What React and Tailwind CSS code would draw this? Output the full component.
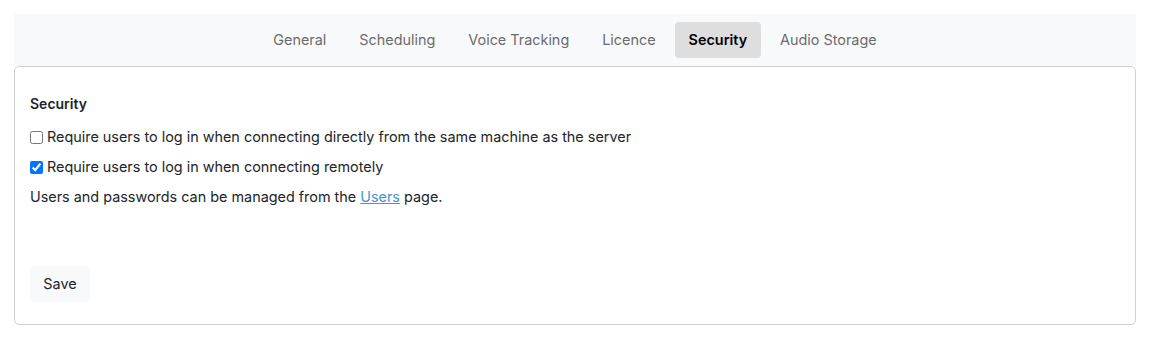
import React, { useState } from "react";

const tabs = ["General", "Scheduling", "Voice Tracking", "Licence", "Security", "Audio Storage"];

function App() {
  const [active, setActive] = useState("Security");
  const [local, setLocal] = useState(false);
  const [remote, setRemote] = useState(true);

  return (
    <div className="w-full min-h-screen bg-white p-[14px] font-['Inter','Liberation_Sans',sans-serif] text-[14.4px] text-[#212529]">
      {/* Tab bar */}
      <div className="bg-[#f8f9fa] flex justify-center gap-[5px] pt-2 pb-2">
        {tabs.map((tab) => (
          <button
            key={tab}
            onClick={() => setActive(tab)}
            className={`h-9 px-[14px] rounded-[4px] text-[14.4px] ${
              active === tab
                ? "bg-[#dedede] text-black font-semibold"
                : "text-[#6c6c6c]"
            }`}
          >
            {tab}
          </button>
        ))}
      </div>

      {/* Card */}
      <div className="border border-[#d0d0d0] rounded-[5px] px-[15px] pt-[27px] pb-[22px]">
        <h3 className="font-semibold text-[14px] leading-5 mb-[13px]">Security</h3>
        <label className="flex items-center gap-1 leading-5">
          <input
            type="checkbox"
            checked={local}
            onChange={(e) => setLocal(e.target.checked)}
            className="w-[13px] h-[13px] m-0"
          />
          Require users to log in when connecting directly from the same machine as the server
        </label>
        <label className="flex items-center gap-1 leading-5 mt-[10px]">
          <input
            type="checkbox"
            checked={remote}
            onChange={(e) => setRemote(e.target.checked)}
            className="w-[13px] h-[13px] m-0"
          />
          Require users to log in when connecting remotely
        </label>
        <p className="leading-5 mt-[10px]">
          Users and passwords can be managed from the{" "}
          <a href="#" className="text-[#4a8fd6] underline">
            Users
          </a>{" "}
          page.
        </p>
        <button className="mt-[59px] h-9 w-[60px] bg-[#f8f9fa] rounded-[5px] text-[14.4px] text-[#212529]">
          Save
        </button>
      </div>
    </div>
  );
}

export default App;
